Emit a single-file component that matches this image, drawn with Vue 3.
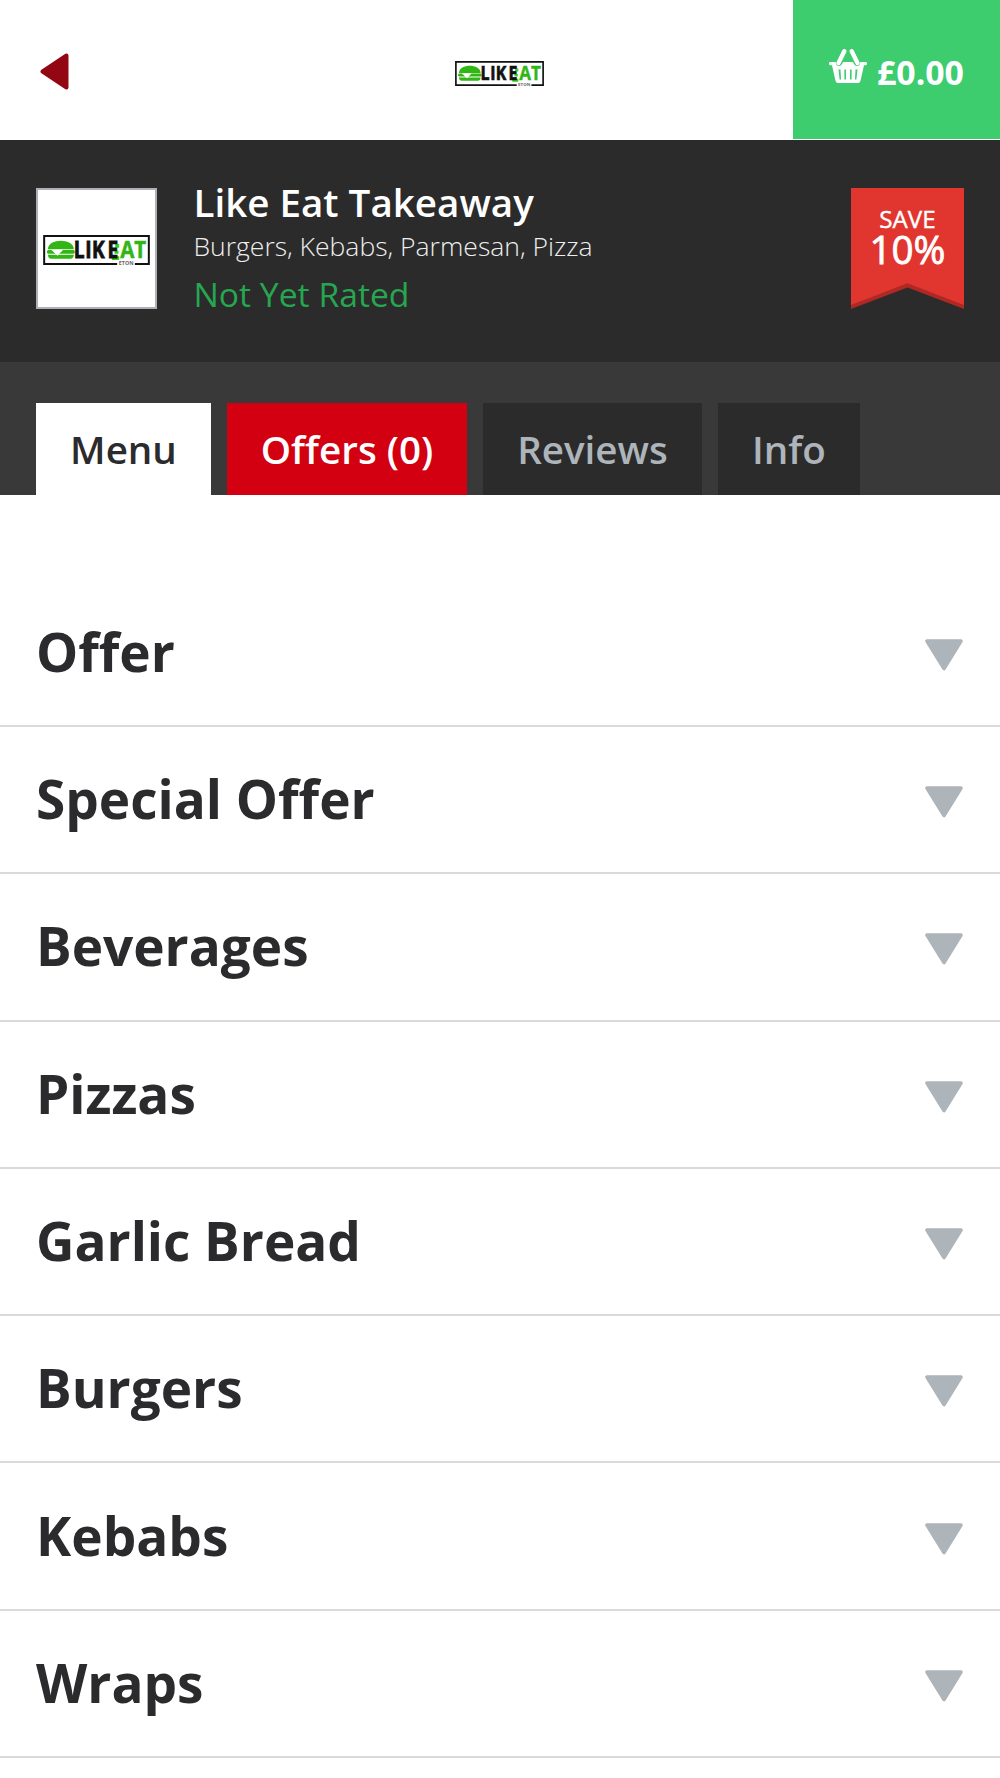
<script setup>
import { h } from 'vue'

const tabs = [
  { label: 'Menu', kind: 'menu' },
  { label: 'Offers (0)', kind: 'offers' },
  { label: 'Reviews', kind: 'reviews' },
  { label: 'Info', kind: 'info' },
]

const categories = [
  'Offer',
  'Special Offer',
  'Beverages',
  'Pizzas',
  'Garlic Bread',
  'Burgers',
  'Kebabs',
  'Wraps',
]

const word = (text, x, y, size, fill, extra = {}) =>
  h('text', {
    x, y, fill,
    'font-size': size,
    'font-weight': 700,
    'font-family': 'Open Sans, sans-serif',
    ...extra,
  }, text)

const fit = (length) => ({ textLength: length, lengthAdjust: 'spacingAndGlyphs' })

const BrandLogo = () =>
  h('svg', { viewBox: '0 0 320 90', overflow: 'visible' }, [
    h('path', { d: 'M222 87H3V3h314v84h-42', fill: 'none', stroke: '#111', 'stroke-width': 6 }),
    h('path', { d: 'M14 43C15 9 91 9 92 43Z', fill: '#32b616' }),
    h('rect', { x: 11, y: 45, width: 84, height: 11, rx: 5, fill: '#32b616' }),
    h('path', { d: 'M14 59h78q-1 12-10 12H24q-9 0-10-12Z', fill: '#32b616' }),
    h('path', { d: 'M24 44h36L43 62Z', fill: '#fff' }),
    h('path', { d: 'M216 27h12v11h-12zM214 47h12v9h-12zM206 64h22v11h-22z', fill: '#32d416' }),
    word('LIKE', '112 154 179 235', 70, 70, '#111', {
      transform: 'scale(0.82 1)', stroke: '#111', 'stroke-width': 2.5,
    }),
    word('AT', 231, 70, 70, '#32b616', { stroke: '#32b616', 'stroke-width': 1.5, ...fit(78) }),
    word('ETON', 227, 90, 13, '#666', fit(44)),
  ])
</script>

<template>
  <div class="page">
    <header class="topbar">
      <svg class="back" viewBox="0 0 29 37">
        <path d="M2.5 18.5 26.5 2.5v32Z" fill="#930713" stroke="#930713" stroke-width="4" stroke-linejoin="round" />
      </svg>
      <BrandLogo class="brand" />
      <div class="basket">
        <svg class="basket-icon" viewBox="0 0 38 34">
          <path d="M15.3 2.2 9.5 14M22.7 2.2 28.5 14" fill="none" stroke="#fff" stroke-width="4.3" stroke-linecap="round" />
          <path
            fill="#fff"
            fill-rule="evenodd"
            d="M1 13H6.6Q7 17 10 17Q12.5 16.8 14 13H24Q25.5 16.8 28 17Q31 17 31.4 13H37Q38 13 38 14.5T37 16.3H35L31.6 31.5Q31 34 29 34H9Q7 34 6.4 31.5L3 16.3H1Q0 16.3 0 14.5T1 13ZM9.5 20.5 10.6 30.5H12L11.5 20.5ZM15.4 20.5V30.5H17V20.5ZM21 20.5V30.5H22.6V20.5ZM26.5 20.5 26 30.5H27.4L28.5 20.5Z"
          />
        </svg>
        <span class="total">£0.00</span>
      </div>
    </header>

    <section class="vendor">
      <div class="thumb"><BrandLogo class="thumb-logo" /></div>
      <div class="details">
        <h1 class="name">Like Eat Takeaway</h1>
        <p class="cuisines">Burgers, Kebabs, Parmesan, Pizza</p>
        <p class="rating">Not Yet Rated</p>
      </div>
      <div class="ribbon">
        <svg class="ribbon-shape" viewBox="0 0 113 121">
          <path d="M0 0H113V121L56.5 99.5 0 121Z" fill="#ae2924" />
          <path d="M0 0H113V117L56.5 95.3 0 117Z" fill="#e13630" />
        </svg>
        <span class="save">SAVE</span>
        <span class="percent">10%</span>
      </div>
    </section>

    <nav class="tabs">
      <a v-for="tab in tabs" :key="tab.kind" class="tab" :class="tab.kind">{{ tab.label }}</a>
    </nav>

    <main class="categories">
      <div v-for="category in categories" :key="category" class="category">
        <h2 class="category-name">{{ category }}</h2>
        <svg class="chevron" viewBox="0 0 38 32">
          <path d="M2 2H36L19 29.5Z" fill="#adb4ba" stroke="#adb4ba" stroke-width="3.6" stroke-linejoin="round" />
        </svg>
      </div>
    </main>
  </div>
</template>

<style>
body {
  margin: 0;
  background: #fff;
}
</style>

<style scoped>
.page {
  width: 1000px;
  height: 1778px;
  overflow: hidden;
  background: #fff;
  font-family: "Open Sans", sans-serif;
  color: #2b2b2d;
  font-variant-ligatures: none;
}
.topbar {
  height: 140px;
  display: flex;
  align-items: flex-start;
}
.back {
  width: 29px;
  height: 37px;
  margin: 52.5px 0 0 39.5px;
}
.brand {
  width: 89px;
  height: 25px;
  margin: 61px 0 0 386px;
}
.basket {
  box-sizing: border-box;
  width: 207px;
  height: 139px;
  margin-left: auto;
  padding-left: 36px;
  display: flex;
  background: #3dcc6e;
  color: #fff;
}
.basket-icon {
  width: 38px;
  height: 34px;
  margin-top: 49px;
}
.total {
  margin: 49.4px 0 0 10px;
  font-size: 33.8px;
  line-height: 46px;
  font-weight: 700;
}
.vendor {
  box-sizing: border-box;
  height: 222px;
  padding: 48.4px 36px 0 36.3px;
  display: flex;
  background: #2b2b2b;
}
.thumb {
  box-sizing: border-box;
  width: 121px;
  height: 121px;
  border: 2.5px solid #adb1b5;
  display: flex;
  align-items: center;
  justify-content: center;
  background: #fff;
}
.thumb-logo {
  width: 107px;
  height: 30px;
  margin-top: 2px;
}
.details {
  margin-left: 36.2px;
}
.name {
  margin: -11px 0 0;
  font-size: 38.55px;
  line-height: 50px;
  font-weight: 600;
  color: #fff;
}
.cuisines {
  margin: 1px 0 0;
  font-size: 26.5px;
  line-height: 36px;
  font-weight: 300;
  color: #eee;
}
.rating {
  margin: 8px 0 0;
  font-size: 33.7px;
  line-height: 44px;
  color: #26a650;
}
.ribbon {
  position: relative;
  width: 113px;
  height: 121px;
  margin-left: auto;
  display: flex;
  flex-direction: column;
  align-items: center;
  color: #fff;
}
.ribbon-shape {
  position: absolute;
  inset: 0;
  width: 113px;
  height: 121px;
}
.save,
.percent {
  position: relative;
}
.save {
  margin-top: 16px;
  font-size: 24.15px;
  line-height: 30px;
  -webkit-text-stroke: 0.4px #fff;
}
.percent {
  margin-top: -5px;
  font-size: 38.6px;
  line-height: 40px;
  -webkit-text-stroke: 0.8px #fff;
}
.tabs {
  height: 133px;
  display: flex;
  align-items: flex-end;
  padding-left: 36px;
  gap: 16px;
  background: #393939;
}
.tab {
  height: 92px;
  display: flex;
  justify-content: center;
  font-size: 38.6px;
  line-height: 92px;
  font-weight: 600;
  background: #2b2b2b;
  color: #adb4ba;
}
.menu {
  width: 175px;
  background: #fff;
  color: #2b2b2d;
}
.offers {
  width: 240px;
  background: #d20011;
  color: #fff;
}
.reviews {
  width: 219px;
}
.info {
  width: 142px;
}
.categories {
  padding-top: 84.7px;
}
.category {
  box-sizing: border-box;
  height: 147.3px;
  padding: 0 36.6px 0 36px;
  border-bottom: 2.4px solid #dadada;
  display: flex;
  justify-content: space-between;
  align-items: center;
}
.category-name {
  margin: -1px 0 0;
  font-size: 53.1px;
  line-height: 72px;
  font-weight: 700;
}
.chevron {
  width: 38px;
  height: 32px;
  margin-top: 5px;
}
</style>
